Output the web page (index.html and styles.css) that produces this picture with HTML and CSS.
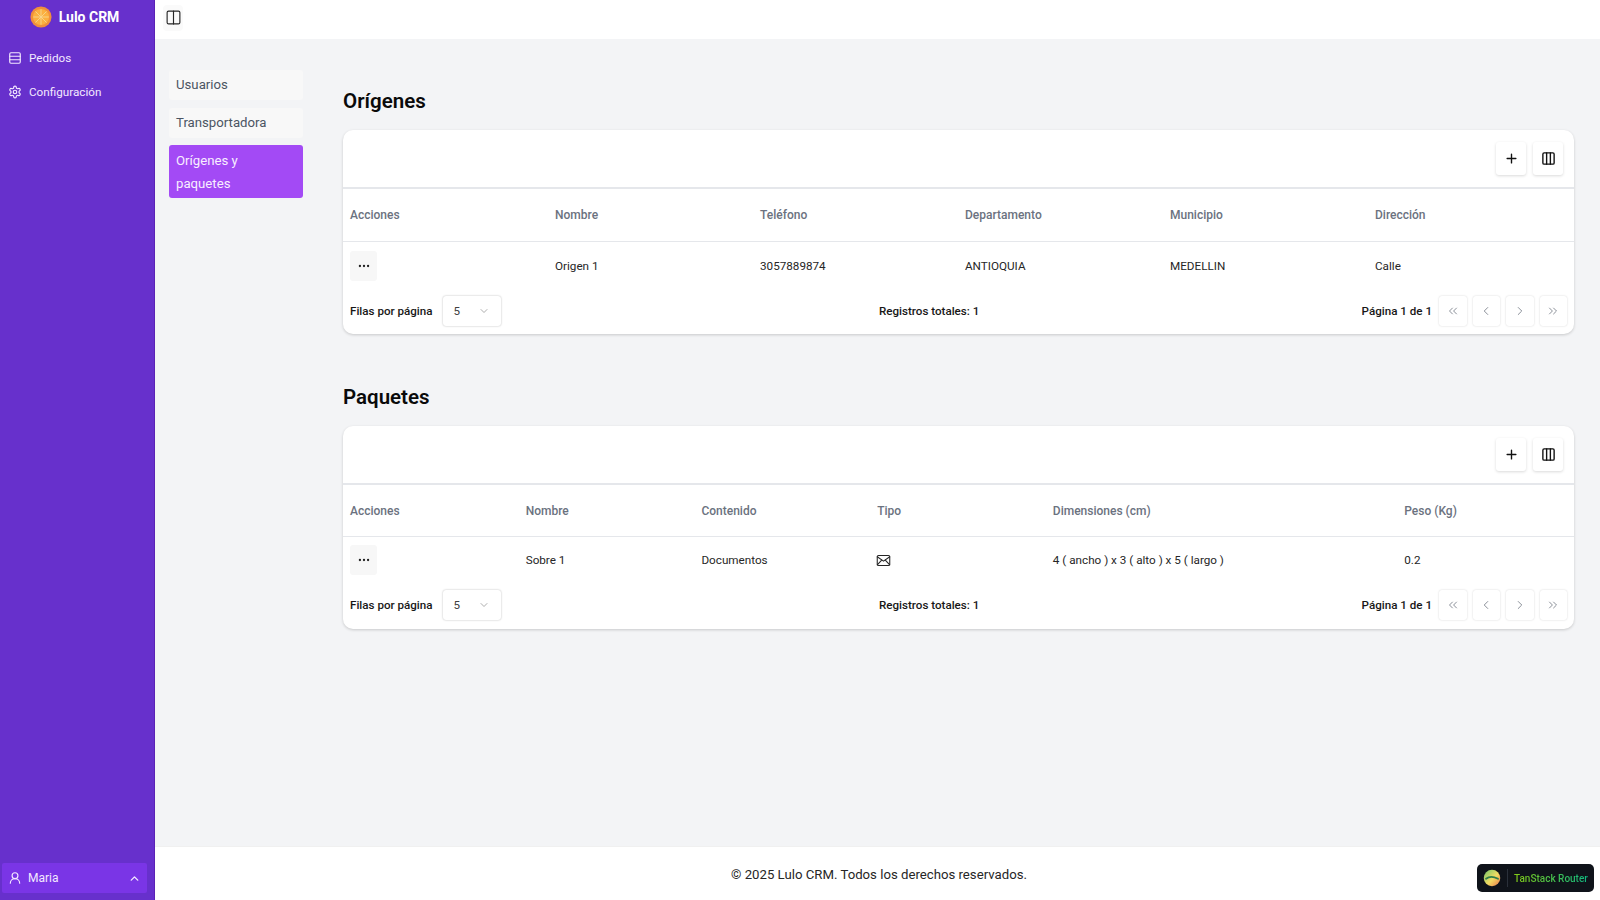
FILE: index.html
```html
<!DOCTYPE html>
<html lang="es">
<head>
<meta charset="utf-8">
<title>Lulo CRM</title>
<link rel="stylesheet" href="styles.css">
</head>
<body>
<div class="app">
  <aside class="sidebar">
    <div class="brand">
      <svg class="logo" viewBox="0 0 24 24"><circle cx="12" cy="12" r="11.5" fill="#f08f3c"/><circle cx="12" cy="12" r="8.8" fill="#fbb040"/><g stroke="#f7d58c" stroke-width="1" fill="none"><path d="M12 4v16M4 12h16M6.3 6.3l11.4 11.4M17.7 6.3 6.3 17.7"/></g></svg>
      <span>Lulo CRM</span>
    </div>
    <nav class="side-nav">
      <a class="side-link"><svg class="ic" viewBox="0 0 24 24"><rect x="3" y="3" width="18" height="18" rx="2"/><path d="M3 9h18M3 15h18"/></svg>Pedidos</a>
      <a class="side-link"><svg class="ic" viewBox="0 0 24 24"><path d="M12.22 2h-.44a2 2 0 0 0-2 2v.18a2 2 0 0 1-1 1.73l-.43.25a2 2 0 0 1-2 0l-.15-.08a2 2 0 0 0-2.73.73l-.22.38a2 2 0 0 0 .73 2.73l.15.1a2 2 0 0 1 1 1.72v.51a2 2 0 0 1-1 1.74l-.15.09a2 2 0 0 0-.73 2.73l.22.38a2 2 0 0 0 2.73.73l.15-.08a2 2 0 0 1 2 0l.43.25a2 2 0 0 1 1 1.73V20a2 2 0 0 0 2 2h.44a2 2 0 0 0 2-2v-.18a2 2 0 0 1 1-1.73l.43-.25a2 2 0 0 1 2 0l.15.08a2 2 0 0 0 2.73-.73l.22-.39a2 2 0 0 0-.73-2.73l-.15-.08a2 2 0 0 1-1-1.74v-.5a2 2 0 0 1 1-1.74l.15-.09a2 2 0 0 0 .73-2.73l-.22-.38a2 2 0 0 0-2.73-.73l-.15.08a2 2 0 0 1-2 0l-.43-.25a2 2 0 0 1-1-1.73V4a2 2 0 0 0-2-2z"/><circle cx="12" cy="12" r="3"/></svg>Configuración</a>
    </nav>
    <div class="user">
      <svg class="ic" viewBox="0 0 24 24"><circle cx="12" cy="8" r="5"/><path d="M20 21a8 8 0 0 0-16 0"/></svg>
      <span class="user-name">Maria</span>
      <svg class="ic-sm" viewBox="0 0 24 24"><path d="m18 15-6-6-6 6"/></svg>
    </div>
  </aside>
  <div class="main">
    <header class="topbar">
      <button class="toggle"><svg class="ic-top" viewBox="0 0 24 24"><rect x="3" y="3" width="18" height="18" rx="2"/><path d="M12 3v18"/></svg></button>
    </header>
    <div class="content">
      <nav class="tabs">
        <a class="tab">Usuarios</a>
        <a class="tab">Transportadora</a>
        <a class="tab active">Orígenes y paquetes</a>
      </nav>
      <div class="sections">
        <section class="section">
          <h2>Orígenes</h2>
          <div class="card">
            <div class="toolbar">
              <button class="tool"><svg class="ic-tool" viewBox="0 0 24 24"><path d="M5 12h14M12 5v14"/></svg></button>
              <button class="tool"><svg class="ic-tool" viewBox="0 0 24 24"><rect x="3" y="3" width="18" height="18" rx="2"/><path d="M9 3v18M15 3v18"/></svg></button>
            </div>
            <div class="row head cols-a"><span>Acciones</span><span>Nombre</span><span>Teléfono</span><span>Departamento</span><span>Municipio</span><span>Dirección</span></div>
            <div class="row body cols-a">
              <span><button class="dots"><svg class="ic-dots" viewBox="0 0 24 24"><circle cx="5" cy="12" r="1"/><circle cx="12" cy="12" r="1"/><circle cx="19" cy="12" r="1"/></svg></button></span><span>Origen 1</span><span>3057889874</span><span>ANTIOQUIA</span><span>MEDELLIN</span><span>Calle</span>
            </div>
            <div class="pager">
              <div class="pager-left"><b>Filas por página</b><div class="select"><span>5</span><svg class="ic-chev" viewBox="0 0 24 24"><path d="m6 9 6 6 6-6"/></svg></div></div>
              <b class="pager-mid">Registros totales: 1</b>
              <div class="pager-right"><b>Página 1 de 1</b>
                <div class="pbtns">
                  <button class="pbtn"><svg class="ic-pg" viewBox="0 0 24 24"><path d="m11 17-5-5 5-5M18 17l-5-5 5-5"/></svg></button>
                  <button class="pbtn"><svg class="ic-pg" viewBox="0 0 24 24"><path d="m15 18-6-6 6-6"/></svg></button>
                  <button class="pbtn"><svg class="ic-pg" viewBox="0 0 24 24"><path d="m9 18 6-6-6-6"/></svg></button>
                  <button class="pbtn"><svg class="ic-pg" viewBox="0 0 24 24"><path d="m6 17 5-5-5-5M13 17l5-5-5-5"/></svg></button>
                </div>
              </div>
            </div>
          </div>
        </section>
        <section class="section">
          <h2>Paquetes</h2>
          <div class="card">
            <div class="toolbar">
              <button class="tool"><svg class="ic-tool" viewBox="0 0 24 24"><path d="M5 12h14M12 5v14"/></svg></button>
              <button class="tool"><svg class="ic-tool" viewBox="0 0 24 24"><rect x="3" y="3" width="18" height="18" rx="2"/><path d="M9 3v18M15 3v18"/></svg></button>
            </div>
            <div class="row head cols-b"><span>Acciones</span><span>Nombre</span><span>Contenido</span><span>Tipo</span><span>Dimensiones (cm)</span><span>Peso (Kg)</span></div>
            <div class="row body cols-b">
              <span><button class="dots"><svg class="ic-dots" viewBox="0 0 24 24"><circle cx="5" cy="12" r="1"/><circle cx="12" cy="12" r="1"/><circle cx="19" cy="12" r="1"/></svg></button></span><span>Sobre 1</span><span>Documentos</span><span><svg class="ic-mail" viewBox="0 0 24 24"><rect x="2" y="4" width="20" height="16" rx="2"/><path d="m2 6 10 7 10-7M2 19l7.5-8M22 19l-7.5-8"/></svg></span><span>4 ( ancho ) x 3 ( alto ) x 5 ( largo )</span><span>0.2</span>
            </div>
            <div class="pager pager-b">
              <div class="pager-left"><b>Filas por página</b><div class="select"><span>5</span><svg class="ic-chev" viewBox="0 0 24 24"><path d="m6 9 6 6 6-6"/></svg></div></div>
              <b class="pager-mid">Registros totales: 1</b>
              <div class="pager-right"><b>Página 1 de 1</b>
                <div class="pbtns">
                  <button class="pbtn"><svg class="ic-pg" viewBox="0 0 24 24"><path d="m11 17-5-5 5-5M18 17l-5-5 5-5"/></svg></button>
                  <button class="pbtn"><svg class="ic-pg" viewBox="0 0 24 24"><path d="m15 18-6-6 6-6"/></svg></button>
                  <button class="pbtn"><svg class="ic-pg" viewBox="0 0 24 24"><path d="m9 18 6-6-6-6"/></svg></button>
                  <button class="pbtn"><svg class="ic-pg" viewBox="0 0 24 24"><path d="m6 17 5-5-5-5M13 17l5-5-5-5"/></svg></button>
                </div>
              </div>
            </div>
          </div>
        </section>
      </div>
    </div>
    <footer class="footer">© 2025 Lulo CRM. Todos los derechos reservados.</footer>
  </div>
</div>
<div class="router-badge">
  <svg class="router-logo" viewBox="0 0 24 24"><defs><linearGradient id="rg" x1="0" y1="0" x2="1" y2="1"><stop offset="0" stop-color="#6fc66a"/><stop offset=".55" stop-color="#f3dc62"/><stop offset="1" stop-color="#e9744b"/></linearGradient></defs><circle cx="12" cy="12" r="11" fill="url(#rg)"/><path d="M4 13c4-3 10-3 16 0" stroke="#2f7d4a" stroke-width="2.4" fill="none"/></svg>
  <span class="router-sep"></span>
  <span class="router-text">TanStack Router</span>
</div>
</body>
</html>
```
FILE: styles.css
```css
* { box-sizing: border-box; }
html, body { margin: 0; height: 100%; }
body { font-family: Roboto, "Noto Sans", sans-serif; color: #0a0a0a; background: #fff; overflow: hidden; }
button { font: inherit; padding: 0; cursor: pointer; }
svg { fill: none; stroke: currentColor; stroke-width: 2; stroke-linecap: round; stroke-linejoin: round; display: block; }

.app { display: flex; height: 900px; }

.sidebar { width: 155px; flex: none; background: #6730cc; color: #f3e8ff; display: flex; flex-direction: column; border-right: 1px solid #5b21b6; }
.brand { height: 33px; display: flex; align-items: center; justify-content: center; gap: 7px; color: #fff; font-size: 14px; font-weight: 700; padding-right: 5px; }
.logo { width: 22px; height: 22px; stroke: none; }
.side-nav { display: flex; flex-direction: column; gap: 8px; padding: 12px 8px 0; }
.side-link { display: flex; align-items: center; gap: 7px; height: 26px; font-size: 11.7px; }
.ic { width: 14px; height: 14px; flex: none; }
.user { margin: auto 7px 7px 2px; height: 30px; background: #7a35e6; display: flex; align-items: center; gap: 6px; padding: 0 6px; font-size: 12px; border-radius: 2px; }
.user-name { flex: 1; }
.ic-sm { width: 13px; height: 13px; stroke-width: 2.6; }

.main { flex: 1; min-width: 0; display: flex; flex-direction: column; }
.topbar { height: 39px; flex: none; background: #fff; display: flex; align-items: center; padding-left: 8px; }
.toggle { width: 20px; height: 26px; margin-top: -4px; background: #fafafa; border: 0; border-radius: 4px; color: #262626; display: flex; align-items: center; justify-content: center; }
.ic-top { width: 17px; height: 17px; stroke-width: 1.6; }

.content { flex: 1; background: #f3f4f6; display: flex; padding: 31px 26px 0 14px; min-height: 0; }
.tabs { width: 134px; flex: none; display: flex; flex-direction: column; gap: 8px; font-size: 13.2px; color: #4b5563; }
.tab { padding: 3px 24px 4px 7px; line-height: 23px; background: #f8f8f8; border-radius: 3px; }
.tab.active { background: #a34af5; color: #f8eeff; margin-top: -1px; padding: 4px 24px 3px 7px; }

.sections { flex: 1; min-width: 0; margin-left: 40px; display: flex; flex-direction: column; gap: 49px; padding-top: 17px; }
h2 { margin: 0 0 14px; font-size: 20.5px; line-height: 29px; font-weight: 600; color: #0a0a0a; }

.card { background: #fff; border-radius: 10px; box-shadow: 0 1px 3px rgba(0,0,0,.18); }
.toolbar { height: 59px; display: flex; justify-content: flex-end; align-items: center; gap: 7px; padding: 0 11px; border-bottom: 2px solid #e5e7eb; }
.tool { width: 30px; height: 33px; background: #fff; border: 0; border-radius: 3px; box-shadow: 0 1px 3px rgba(0,0,0,.15); color: #111; display: flex; align-items: center; justify-content: center; }
.ic-tool { width: 15px; height: 15px; stroke-width: 2.2; }

.row { display: grid; align-items: center; font-size: 12px; padding: 0 1px 0 0; }
.row > span { padding-left: 7px; display: block; }
.cols-a { grid-template-columns: repeat(6, 1fr); }
.cols-b { grid-template-columns: 1fr 1fr 1fr 1fr 2fr 1fr; }
.head { height: 53px; color: #6b7280; font-weight: 500; border-bottom: 1px solid #e5e7eb; }
.head.cols-b { height: 52px; }
.body { height: 47px; color: #262626; font-size: 11.7px; }
.body.cols-b { height: 46px; }
.dots { width: 27px; height: 30px; background: #f7f7f7; border: 0; border-radius: 3px; color: #222; display: flex; align-items: center; justify-content: center; }
.ic-dots { width: 14px; height: 14px; stroke-width: 2; }
.ic-mail { width: 15px; height: 15px; stroke-width: 1.7; margin-left: -1px; }

.pager { height: 45px; padding: 0 7px 2px 7px; display: flex; align-items: center; font-size: 11.6px; }
.pager-b { height: 46px; padding-bottom: 3px; }
.pager b { font-weight: 500; color: #171717; }
.pager-left { width: 529px; flex: none; display: flex; align-items: center; gap: 11px; }
.pager-mid { flex: 1; }
.pager-right { display: flex; align-items: center; gap: 7px; }
.select { width: 58px; height: 30px; border-radius: 3px; box-shadow: 0 0 2px rgba(0,0,0,.3); display: flex; align-items: center; justify-content: space-between; padding: 0 11px 0 10px; color: #404040; }
.ic-chev { width: 12px; height: 12px; stroke-width: 1.4; color: #8a8a8a; }
.pbtns { display: flex; gap: 6px; }
.pbtn { width: 27.5px; height: 30px; background: #fff; border: 0; border-radius: 3px; box-shadow: 0 0 2px rgba(0,0,0,.18); color: #7a808a; display: flex; align-items: center; justify-content: center; }
.ic-pg { width: 14px; height: 14px; stroke-width: 1.5; }

.footer { height: 54px; flex: none; background: #fff; border-top: 1px solid #f0f0f0; display: flex; align-items: center; justify-content: center; font-size: 13.2px; color: #262626; padding: 1px 0 0 3px; }

.router-badge { position: fixed; right: 6px; bottom: 8px; width: 117px; height: 28px; background: #0f131a; border-radius: 5px; display: flex; align-items: center; padding: 0 6px; gap: 6px; }
.router-logo { width: 18px; height: 18px; stroke: none; flex: none; }
.router-sep { width: 1px; height: 18px; background: #2a303a; flex: none; }
.router-text { font-size: 10px; font-weight: 500; white-space: nowrap; background: linear-gradient(90deg, #84cc16, #10b981); -webkit-background-clip: text; background-clip: text; color: transparent; }
```
